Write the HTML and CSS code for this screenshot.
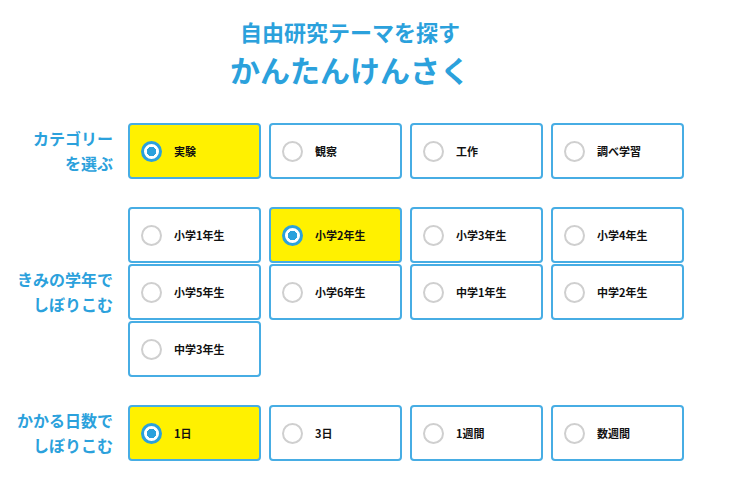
FILE: index.html
```html
<!DOCTYPE html>
<html lang="ja">
<head>
<meta charset="utf-8">
<title>自由研究テーマを探す かんたんけんさく</title>
<link rel="stylesheet" href="styles.css">
</head>
<body>
<div class="page">
  <header class="header">
    <h1 class="title-sub">自由研究テーマを探す</h1>
    <h2 class="title-main">かんたんけんさく</h2>
  </header>

  <section class="row">
    <div class="label">カテゴリー<br>を選ぶ</div>
    <div class="options">
      <label class="opt is-checked"><span class="radio"></span><span class="txt">実験</span></label>
      <label class="opt"><span class="radio"></span><span class="txt">観察</span></label>
      <label class="opt"><span class="radio"></span><span class="txt">工作</span></label>
      <label class="opt"><span class="radio"></span><span class="txt">調べ学習</span></label>
    </div>
  </section>

  <section class="row">
    <div class="label">きみの学年で<br>しぼりこむ</div>
    <div class="options">
      <label class="opt"><span class="radio"></span><span class="txt">小学1年生</span></label>
      <label class="opt is-checked"><span class="radio"></span><span class="txt">小学2年生</span></label>
      <label class="opt"><span class="radio"></span><span class="txt">小学3年生</span></label>
      <label class="opt"><span class="radio"></span><span class="txt">小学4年生</span></label>
      <label class="opt"><span class="radio"></span><span class="txt">小学5年生</span></label>
      <label class="opt"><span class="radio"></span><span class="txt">小学6年生</span></label>
      <label class="opt"><span class="radio"></span><span class="txt">中学1年生</span></label>
      <label class="opt"><span class="radio"></span><span class="txt">中学2年生</span></label>
      <label class="opt"><span class="radio"></span><span class="txt">中学3年生</span></label>
    </div>
  </section>

  <section class="row">
    <div class="label">かかる日数で<br>しぼりこむ</div>
    <div class="options">
      <label class="opt is-checked"><span class="radio"></span><span class="txt">1日</span></label>
      <label class="opt"><span class="radio"></span><span class="txt">3日</span></label>
      <label class="opt"><span class="radio"></span><span class="txt">1週間</span></label>
      <label class="opt"><span class="radio"></span><span class="txt">数週間</span></label>
    </div>
  </section>
</div>
</body>
</html>
```

FILE: styles.css
```css
* { box-sizing: border-box; }

html, body {
  margin: 0;
  padding: 0;
  background: #ffffff;
}

body {
  font-family: "Noto Sans CJK JP", "Noto Sans", sans-serif;
  color: #222222;
}

.page {
  width: 700px;
  padding-top: 16px;
}

.header {
  text-align: center;
  color: #2ba1dc;
  margin-bottom: 34px;
}

.title-sub {
  margin: 0;
  font-size: 22px;
  line-height: 30px;
  font-weight: 700;
}

.title-main {
  margin: 3px 0 0;
  font-size: 30px;
  line-height: 40px;
  font-weight: 700;
}

.row {
  display: flex;
  align-items: center;
  margin-bottom: 28px;
}

.label {
  width: 113px;
  margin-right: 15px;
  text-align: right;
  color: #2ba1dc;
  font-size: 16px;
  line-height: 25px;
  font-weight: 700;
}

.options {
  display: grid;
  grid-template-columns: repeat(4, 133px);
  column-gap: 8px;
  row-gap: 1px;
}

.opt {
  height: 56px;
  display: flex;
  align-items: center;
  padding-left: 13px;
  border: 2px solid #47ade4;
  border-radius: 4px;
  background: #ffffff;
}

.opt.is-checked {
  background: #fff100;
}

.radio {
  width: 21px;
  height: 21px;
  border-radius: 50%;
  border: 2px solid #cfcfcf;
  background: #ffffff;
  flex: none;
  margin-left: -2px;
}

.is-checked .radio {
  border: 3px solid #2ba1dc;
  background: radial-gradient(circle, #2ba1dc 0 4.5px, #ffffff 5px);
}

.txt {
  margin-left: 12px;
  font-size: 11px;
  font-weight: 700;
  color: #111111;
}
```
